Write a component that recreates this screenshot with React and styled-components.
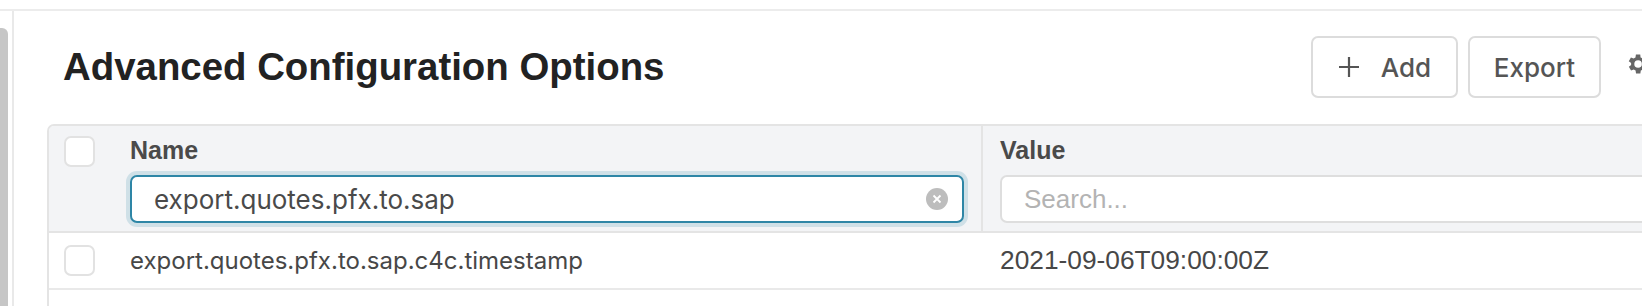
import React from 'react';
import styled, { createGlobalStyle } from 'styled-components';

const GlobalStyle = createGlobalStyle`
  html, body {
    margin: 0;
    padding: 0;
    background: #ffffff;
    overflow: hidden;
  }
  body {
    font-family: "Liberation Sans", Arial, sans-serif;
  }
`

const Page = styled.div`
  display: flex;
  width: 1642px;
  height: 297px;
  overflow: hidden;
  border-top: 2px solid #ececec;
  margin-top: 9px;
  box-sizing: border-box;
`

const Scrollbar = styled.div`
  width: 12px;
  flex-shrink: 0;
  padding-top: 17px;
  box-sizing: border-box;
`

const Thumb = styled.div`
  width: 8px;
  height: 100%;
  background: #c6c6c6;
  border-top-right-radius: 6px;
`

const Panel = styled.section`
  flex: 1;
  min-width: 0;
  border-left: 2px solid #e9e9e9;
  padding-left: 33px;
`

const Content = styled.div`
  width: 1606px;
  display: flex;
  flex-direction: column;
  height: 100%;
`

const Header = styled.div`
  display: flex;
  align-items: center;
  justify-content: space-between;
  height: 62px;
  margin-top: 25px;
  margin-bottom: 26px;
  padding: 0 0 0 16px;
  flex-shrink: 0;
`

const Title = styled.h1`
  margin: 0;
  font-family: "Liberation Sans", Arial, sans-serif;
  font-size: 38.4px;
  font-weight: 700;
  color: #222222;
`

const Actions = styled.div`
  display: flex;
  align-items: center;
  gap: 10px;
`

const Button = styled.button`
  display: flex;
  align-items: center;
  justify-content: center;
  gap: 21px;
  height: 62px;
  width: ${p => p.$w}px;
  background: #ffffff;
  border: 2px solid #dcdcdc;
  border-radius: 7px;
  font-family: Inter, "Liberation Sans", sans-serif;
  font-size: 26px;
  font-weight: 500;
  color: #555555;
  padding: 0;
  box-sizing: border-box;
  flex-shrink: 0;
`

const IconButton = styled.span`
  display: flex;
  flex-shrink: 0;
  margin-left: 13px;
  margin-right: 3px;
  margin-top: -6px;
  width: 26px;
  height: 26px;
`

const Table = styled.div`
  flex: 1;
  width: 1660px;
  border-top: 2px solid #e4e4e4;
  border-left: 2px solid #e4e4e4;
  border-top-left-radius: 7px;
  overflow: hidden;
`

const HeadRow = styled.div`
  display: grid;
  grid-template-columns: 81px 851px 1fr;
  background: #f3f4f6;
  border-bottom: 2px solid #e4e4e4;
  height: 107px;
  box-sizing: border-box;
`

const Row = styled.div`
  display: grid;
  grid-template-columns: 81px 851px 1fr;
  align-items: center;
  border-bottom: 2px solid #e9e9e9;
  height: 57px;
  box-sizing: border-box;
`

const CheckCell = styled.div`
  padding-left: 15px;
  padding-top: ${p => p.$top || 0}px;
`

const Checkbox = styled.span`
  display: block;
  width: 31px;
  height: 31px;
  box-sizing: border-box;
  border: 2px solid #e2e2e2;
  border-radius: 7px;
  background: #ffffff;
`

const HeadCell = styled.div`
  display: flex;
  flex-direction: column;
  padding: 10px 17px 0 ${p => p.$pl || 0}px;
  border-left: ${p => p.$divider ? '2px solid #e4e4e4' : 'none'};
`

const Label = styled.div`
  font-family: "Liberation Sans", Arial, sans-serif;
  font-size: 25px;
  font-weight: 700;
  color: #4a4a4a;
  height: 28px;
  line-height: 28px;
  margin-bottom: 11px;
`

const InputBox = styled.div`
  display: flex;
  align-items: center;
  height: 48px;
  box-sizing: border-box;
  background: #ffffff;
  border: 2px solid ${p => p.$focused ? '#2e86a6' : '#dedede'};
  border-radius: 7px;
  box-shadow: ${p => p.$focused ? '0 0 0 4px rgba(46,134,166,0.18)' : 'none'};
  padding: 0 14px 0 22px;
`

const InputText = styled.span`
  flex: 1;
  font-family: ${p => p.$placeholder ? '"Liberation Sans", Arial' : 'Inter, "Liberation Sans"'}, sans-serif;
  font-size: 26px;
  color: ${p => p.$placeholder ? '#b3b3b3' : '#4a4a4a'};
  white-space: nowrap;
`

const Clear = styled.span`
  display: flex;
  align-items: center;
  justify-content: center;
  width: 22px;
  height: 22px;
  border-radius: 50%;
  background: #bdbdbd;
`

const Cell = styled.div`
  padding-left: ${p => p.$pl || 0}px;
  font-family: ${p => p.$mono ? '"Liberation Sans", Arial' : 'Inter, "Liberation Sans"'}, sans-serif;
  font-size: ${p => p.$size || 24}px;
  color: #474747;
  white-space: nowrap;
`

const PlusIcon = () => (
  <svg width="22" height="22" viewBox="0 0 22 22">
    <path d="M11 1v20M1 11h20" stroke="#555" strokeWidth="2.2" />
  </svg>
)

const GearIcon = () => (
  <svg width="26" height="26" viewBox="0 0 24 24" fill="#666">
    <path d="M19.4 13a7.5 7.5 0 0 0 0-2l2.1-1.6-2-3.5-2.5 1a7.4 7.4 0 0 0-1.7-1L15 3.3h-4l-.4 2.6a7.4 7.4 0 0 0-1.7 1l-2.5-1-2 3.5L6.6 11a7.5 7.5 0 0 0 0 2l-2.1 1.6 2 3.5 2.5-1a7.4 7.4 0 0 0 1.7 1l.4 2.6h4l.4-2.6a7.4 7.4 0 0 0 1.7-1l2.5 1 2-3.5zM13 15.5a3.5 3.5 0 1 1 0-7 3.5 3.5 0 0 1 0 7z" />
  </svg>
)

const App = () => {
  return (
    <>
      <GlobalStyle />
      <Page>
        <Scrollbar>
          <Thumb />
        </Scrollbar>
        <Panel>
          <Content>
            <Header>
              <Title>Advanced Configuration Options</Title>
              <Actions>
                <Button $w={147}><PlusIcon />Add</Button>
                <Button $w={133}>Export</Button>
                <IconButton><GearIcon /></IconButton>
              </Actions>
            </Header>
            <Table>
              <HeadRow>
                <CheckCell $top={10}><Checkbox /></CheckCell>
                <HeadCell>
                  <Label>Name</Label>
                  <InputBox $focused>
                    <InputText>export.quotes.pfx.to.sap</InputText>
                    <Clear>
                      <svg width="10" height="10" viewBox="0 0 10 10">
                        <path d="M1.5 1.5l7 7M8.5 1.5l-7 7" stroke="#fff" strokeWidth="1.8" />
                      </svg>
                    </Clear>
                  </InputBox>
                </HeadCell>
                <HeadCell $divider $pl={17}>
                  <Label>Value</Label>
                  <InputBox>
                    <InputText $placeholder>Search...</InputText>
                  </InputBox>
                </HeadCell>
              </HeadRow>
              <Row>
                <CheckCell><Checkbox /></CheckCell>
                <Cell>export.quotes.pfx.to.sap.c4c.timestamp</Cell>
                <Cell $pl={19} $mono $size={26.3}>2021-09-06T09:00:00Z</Cell>
              </Row>
            </Table>
          </Content>
        </Panel>
      </Page>
    </>
  );
}

export default App;
